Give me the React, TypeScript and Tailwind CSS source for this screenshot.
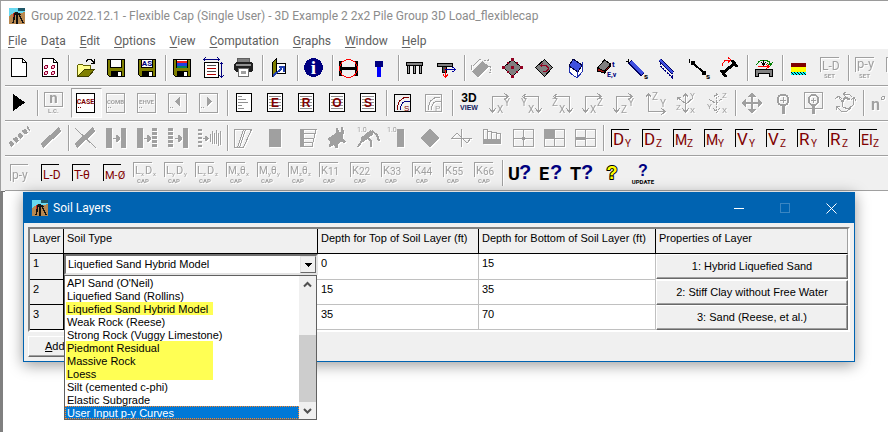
import type { ReactNode } from 'react'

type Tool = { label: string; icon: ReactNode; disabled?: boolean; pressed?: boolean } | null

const LABEL = 'Roboto, sans-serif'
const SANS = "'Liberation Sans', sans-serif"
const SERIF = "'Liberation Serif', serif"

function Txt({
  x,
  y,
  size,
  fill = 'currentColor',
  bold = false,
  font = LABEL,
  anchor = 'start',
  children,
}: {
  x: number
  y: number
  size: number
  fill?: string
  bold?: boolean
  font?: string
  anchor?: 'start' | 'middle' | 'end'
  children: ReactNode
}) {
  return (
    <text x={x} y={y} fontSize={size} fill={fill} fontWeight={bold ? 700 : 400} fontFamily={font} textAnchor={anchor}>
      {children}
    </text>
  )
}

function Line({ d, c = 'currentColor', w = 1, dash }: { d: string; c?: string; w?: number; dash?: string }) {
  return <path d={d} fill="none" stroke={c} strokeWidth={w} strokeDasharray={dash} />
}

function Shape({ d, f = 'currentColor', s = 'none' }: { d: string; f?: string; s?: string }) {
  return <path d={d} fill={f} stroke={s} />
}

// file icons

function Page({ children }: { children?: ReactNode }) {
  return (
    <>
      <Shape d="M7.5 7.5h11l4 4v14h-15z" f="#fff" s="#000" />
      <Line d="M18.5 7.5v4h4" c="#000" />
      {children}
    </>
  )
}

function Floppy({ children }: { children?: ReactNode }) {
  return (
    <>
      <Shape d="M6.5 8.5h17v17h-15l-2-2z" f="#808000" s="#000" />
      <Shape d="M9.5 8.5h11v8h-11z" f="#fff" s="#000" />
      <Shape d="M10 20h11v6h-11z" f="#000" />
      <Shape d="M17 21h3v4h-3z" f="#fff" />
      {children}
    </>
  )
}

function Slab({ y = 11 }: { y?: number }) {
  return (
    <>
      <Shape d={`M6.5 ${y + 0.5}h16v3h-16z`} f="#808080" s="#000" />
      <Shape d={`M7.5 ${y + 3.5}h2v8h-2zM13.5 ${y + 3.5}h2v8h-2zM19.5 ${y + 3.5}h2v8h-2z`} f="#a0a0a0" s="#000" />
    </>
  )
}

// box with letters, used by the load case commands
function Boxed({
  text,
  size = 6,
  color = 'currentColor',
  fill = 'none',
  border = 'currentColor',
}: {
  text?: string
  size?: number
  color?: string
  fill?: string
  border?: string
}) {
  return (
    <>
      <Shape d="M5.5 7.5h18v19h-18z" f={fill} s={border} />
      {text && (
        <Txt x={14.5} y={18} size={size} bold anchor="middle" fill={color}>
          {text}
        </Txt>
      )}
      <Line d="M7 21.5h1m1 0h1" c={color} />
    </>
  )
}

function Report({ letter }: { letter?: string }) {
  return (
    <>
      <Shape d="M7.5 7.5h15v18h-15z" f="#fff" s="#000" />
      {letter ? (
        <>
          <Line d="M9 10.5h12M9 13.5h12M9 16.5h12M9 19.5h12M9 22.5h12" c="#909090" />
          <Txt x={15} y={21} size={12} bold font={SANS} anchor="middle" fill="#800000">
            {letter}
          </Txt>
        </>
      ) : (
        <Line d="M9 10.5h4M9 13.5h8M9 16.5h10M9 19.5h4M9 22.5h6" c="#909090" />
      )}
    </>
  )
}

function Curves({ letter, a, b, border }: { letter: string; a: string; b: string; border: string }) {
  return (
    <>
      <Shape d="M6.5 8.5h16v17h-16z" f="none" s={border} />
      <Line d="M9.5 24v-4l2-5 4-3 5-1" c={a} />
      <Line d="M12.5 24v-3l2-4 3-2h4" c={b} />
      <Txt x={16} y={25} size={8} font={SANS} fill={a}>
        {letter}
      </Txt>
    </>
  )
}

function AxesPair({ kind, a, b }: { kind: 'right' | 'left' | 'up'; a: string; b: string }) {
  if (kind === 'right') {
    return (
      <>
        <Line d="M7.5 26v-15.5h15M4.5 22.5l3 4 3-4M19.5 7.5l4 3-4 3" />
        <Txt x={19} y={20} size={10}>{a}</Txt>
        <Txt x={12} y={27} size={10}>{b}</Txt>
      </>
    )
  }
  if (kind === 'left') {
    return (
      <>
        <Line d="M22.5 26v-15.5h-15M19.5 22.5l3 4 3-4M10.5 7.5l-4 3 4 3" />
        <Txt x={5} y={20} size={10}>{a}</Txt>
        <Txt x={12} y={27} size={10}>{b}</Txt>
      </>
    )
  }
  return (
    <>
      <Line d="M8.5 8v17.5h16M5.5 11.5l3-4 3 4M21.5 22.5l4 3-4 3" />
      <Txt x={12} y={14} size={10}>{a}</Txt>
      <Txt x={20} y={21} size={10}>{b}</Txt>
    </>
  )
}

// letters over a pair of graph axes
function Graph({ text, sub, size }: { text: string; sub: string; size: number }) {
  return (
    <>
      <Line d="M6.5 26v-17.5h17" c="#000" />
      <Txt x={8} y={24} size={size} fill="#800000">{text}</Txt>
      <Txt x={20} y={26} size={10} fill="#800000">{sub}</Txt>
    </>
  )
}

function Curve({ text, size = 12, color = 'currentColor', axis = 'currentColor' }: { text: string; size?: number; color?: string; axis?: string }) {
  return (
    <>
      <Line d="M6.5 25v-16.5h17" c={axis} />
      <Txt x={8} y={23} size={size} fill={color}>{text}</Txt>
    </>
  )
}

function Labelled({ children, note }: { children?: ReactNode; note: string }) {
  return (
    <>
      <Line d="M5.5 21v-14.5h18" />
      {children}
      <Txt x={9} y={27} size={6} bold>{note}</Txt>
    </>
  )
}

function Cap({ a, b, s }: { a: string; b?: string; s: string }) {
  const wide = a === 'M'
  return (
    <Labelled note="CAP">
      <Txt x={7} y={18} size={wide ? 10 : 11}>{a}</Txt>
      {b ? (
        <>
          <Txt x={wide ? 16 : 13} y={20} size={6}>{s}</Txt>
          <Txt x={wide ? 19 : 17} y={18} size={wide ? 10 : 11}>{b}</Txt>
          <Txt x={25} y={20} size={6}>{s}</Txt>
        </>
      ) : (
        <Txt x={14} y={19} size={10}>{s}</Txt>
      )}
    </Labelled>
  )
}

function Query({ letter }: { letter: string }) {
  return (
    <>
      <Txt x={4} y={24} size={18} bold fill="#000">{letter}</Txt>
      <Txt x={15} y={23} size={20} bold font={SANS} fill="#000080">?</Txt>
    </>
  )
}

const barL = 'M5 7h6v20h-6z'
const barR = 'M20 7h5v20h-5z'
const stripesL = 'M5 7h5v3h-5zM5 11h5v3h-5zM5 15h5v3h-5zM5 19h5v3h-5zM5 23h5v3h-5z'
const stripesR = 'M20 7h5v3h-5zM20 11h5v3h-5zM20 15h5v3h-5zM20 19h5v3h-5zM20 23h5v3h-5z'
const arrowMid = 'M12 17h3v-3h1l3 3v1l-3 3h-1v-3h-3z'

const fileTools: Tool[] = [
  { label: 'New', icon: <Page /> },
  {
    label: 'Data',
    icon: (
      <Page>
        <g fill="#ffc0d8" stroke="#900030">
          <circle cx="11" cy="16" r="1.5" />
          <circle cx="18" cy="16" r="1.5" />
          <circle cx="11" cy="22" r="1.5" />
          <circle cx="18" cy="22" r="1.5" />
        </g>
      </Page>
    ),
  },
  null,
  {
    label: 'Open',
    icon: (
      <>
        <Shape d="M7.5 25.5v-11l1-1h4l1 1h7v4h-6z" f="#ffff90" s="#606000" />
        <Shape d="M7.5 25.5l7-7h10l-6 7z" f="#808000" s="#404000" />
        <Line d="M16 10.5l2-2h3l3 3M24.5 8v4h-4" c="#000" />
      </>
    ),
  },
  { label: 'Save', icon: <Floppy /> },
  {
    label: 'Save as',
    icon: (
      <Floppy>
        <Txt x={15} y={15} size={8} bold anchor="middle" fill="#000080">AS</Txt>
      </Floppy>
    ),
  },
  null,
  {
    label: 'Save graphics',
    icon: (
      <Floppy>
        <Shape d="M10 10h10v2h-10z" f="#f02020" />
        <Shape d="M10 12h10v3h-10z" f="#2040e0" />
        <Shape d="M10 15h10v2h-10z" f="#008060" />
      </Floppy>
    ),
  },
  {
    label: 'Page layout',
    icon: (
      <>
        <Shape d="M6.5 11.5h14v15h-14z" f="#fff" s="#000" />
        <Line d="M9 14.5h9M9 20.5h9" c="#505050" />
        <Line d="M9 17.5h9M9 23.5h9" c="#b00000" />
        <Line d="M5 8.5h17M7.5 6.5l-2 2 2 2M19.5 6.5l2 2-2 2M23.5 11v16M21.5 13.5l2-2 2 2M21.5 24.5l2 2 2-2" c="#000080" />
      </>
    ),
  },
  {
    label: 'Print',
    icon: (
      <>
        <Shape d="M8.5 7.5h12v5h-12z" f="#808080" s="#606060" />
        <Shape d="M5 13l2-2h15l2 2v6l-2 2h-15l-2-2z" f="#202020" />
        <Shape d="M7 13h15v2h-15z" f="#909090" />
        <Shape d="M9.5 17.5h10v8h-10z" f="#fff" s="#707070" />
        <Shape d="M12 20h5v3h-5z" f="#a0a0a0" />
      </>
    ),
  },
  null,
  {
    label: 'Exit',
    icon: (
      <>
        <Shape d="M9.5 12.5h12v10h-12z" f="#fff" s="#000" />
        <Shape d="M8.5 11.5l4-4v14l-4 4z" f="#808000" s="#000" />
        <Line d="M9 25l9-8" c="#2040b0" w={2} />
        <Line d="M15 15.5h5v5" c="#2040b0" w={2} />
      </>
    ),
  },
  null,
  {
    label: 'About',
    icon: (
      <>
        <circle cx="14.5" cy="16.5" r="9.5" fill="#000080" />
        <Txt x={14.5} y={23} size={19} bold font={SERIF} anchor="middle" fill="#fff">i</Txt>
      </>
    ),
  },
  null,
  {
    label: 'Pile sections',
    icon: (
      <>
        <Shape d="M5 10h3v15h-3zM21 10h3v15h-3zM8 16h13v3h-13z" f="#000" />
        <circle cx="14.5" cy="17.5" r="9" fill="none" stroke="#ff0000" />
      </>
    ),
  },
  {
    label: 'Pile properties',
    icon: (
      <>
        <Shape d="M10 10h8v6h-8z" f="#000080" />
        <Shape d="M12 16h4v10h-4z" f="#0000ff" />
      </>
    ),
  },
  null,
  { label: 'Pile cap', icon: <Slab /> },
  {
    label: 'Pile head loads',
    icon: (
      <>
        <Shape d="M6.5 12.5h15v3h-15z" f="#808080" s="#000" />
        <Shape d="M11.5 15.5h4v6h-4z" f="#505050" s="#000" />
        <Line d="M14.5 17v9M12 23.5l2.5 3 2.5-3" c="#ff0000" />
        <Line d="M14 18.5h10M21.5 16l3 2.5-3 2.5" c="#0000a0" />
      </>
    ),
  },
  null,
  {
    label: 'Cap dimensions',
    disabled: true,
    icon: (
      <>
        <Shape d="M6 21l10-11 7 5-11 11z" />
        <Line d="M5 17l8-8M18 9h5M22.5 8v2M5 14v4h2M23 15h3M24.5 15v6M23 21h3M13 8h2" dash="2 1" />
      </>
    ),
  },
  {
    label: 'Cap nodes',
    icon: (
      <>
        <Shape d="M6.5 16.5l9-8 9 8-9 9z" f="#808080" s="#000" />
        <Shape d="M5 15h3v3h-3zM14 7h3v3h-3zM23 15h3v3h-3zM14 24h3v3h-3zM14 15h3v3h-3zM10 11h2v2h-2zM19 11h2v2h-2zM10 20h2v2h-2zM19 20h2v2h-2z" f="#900020" />
      </>
    ),
  },
  {
    label: 'Cap rotation',
    icon: (
      <>
        <Shape d="M7.5 16.5l9-8 8 8-8 9z" f="#808080" s="#000" />
        <Line d="M13 14.5h5l2 2v2l-2 2h-3M14.5 12.5l-2 2 2 2" c="#900020" />
      </>
    ),
  },
  {
    label: 'Cap thickness',
    icon: (
      <>
        <Shape d="M10 15v6l8 6 5-6v-8l-4 7z" f="#fff" s="#2030b0" />
        <Shape d="M10 15l4-7 9 6-4 7z" f="#4050e0" s="#000040" />
        <Line d="M18.5 20v6" c="#2030b0" />
      </>
    ),
  },
  {
    label: 'Cap material',
    icon: (
      <>
        <Shape d="M7.5 18l7-8 6 3v2l-6 7-7-2z" f="#a01010" s="#000" />
        <Shape d="M7.5 17l7-8 6 4-6 7z" f="#808080" s="#000" />
        <Txt x={22} y={16} size={8} bold fill="#000080">t</Txt>
        <Txt x={17} y={26} size={7} bold fill="#000080">E,ν</Txt>
      </>
    ),
  },
  {
    label: 'Beam elements',
    icon: (
      <>
        <Line d="M9 11l13 13" c="#000060" w={5} />
        <Line d="M10 11l12 12" c="#4050e0" w={3} />
        <Line d="M7.5 8v4M5 10.5h2" c="#000" />
        <Txt x={23} y={28} size={8} bold fill="#000">s</Txt>
      </>
    ),
  },
  {
    label: 'Beam sections',
    icon: (
      <>
        <Line d="M8 9l13 13" c="#000060" w={4} />
        <Line d="M8 9l13 13" c="#4050e0" w={2} />
        <Line d="M8.5 12v3l12 12v-5" c="#000080" dash="2 1" />
      </>
    ),
  },
  {
    label: 'Beam joints',
    icon: (
      <>
        <Line d="M9 11l13 12" c="#000" w={2} />
        <Shape d="M8 10h4v4h-4zM19 20h4v4h-4z" f="#000" />
        <Line d="M6.5 8v4" c="#000" />
        <Txt x={23} y={28} size={8} bold fill="#000">s</Txt>
      </>
    ),
  },
  {
    label: 'Beam rotation',
    icon: (
      <>
        <Line d="M10 21l11-9" c="#000" w={3} />
        <Line d="M7 19l5 7M18 9l5 7" c="#000" w={3} />
        <Line d="M8.5 15v-2l3-4h5M14 6.5l3 2.5-3 2.5" c="#ff0000" />
      </>
    ),
  },
  null,
  {
    label: 'Cap loads',
    icon: (
      <>
        <Shape d="M6.5 18.5h17v7h-3v-3h-11v3h-3z" f="#808080" s="#000" />
        <Line d="M7.5 14l2-3 3-2h4l4 2 1 3M18.5 12.5l3 2 2-3" c="#008000" />
        <Line d="M14.5 9v5M12.5 11.5l2 2.5 2-2.5" c="#000" />
        <Line d="M9 15.5h11M17.5 13.5l3 2-3 2" c="#ff0000" />
      </>
    ),
  },
  null,
  {
    label: 'Soil layers',
    icon: (
      <>
        <Shape d="M7 12h15v4h-15z" f="#800000" />
        <Shape d="M7 16h15v5h-15z" f="#ffff00" />
        <Shape d="M7 21h15v3h-15z" f="#00ffff" />
        <Line d="M7 21.5h15" c="#000" dash="1 2" />
        <Line d="M8 22.5h14" c="#000" dash="1 2" />
        <Line d="M9 23.5h13" c="#000" dash="1 2" />
      </>
    ),
  },
  { label: 'L-D set', disabled: true, icon: <Labelled note="SET"><Txt x={7} y={19} size={12}>L-D</Txt></Labelled> },
  null,
  { label: 'p-y set', disabled: true, icon: <Labelled note="SET"><Txt x={7} y={17} size={13}>p-y</Txt></Labelled> },
  { label: 't-z set', disabled: true, icon: <Line d="M5.5 21v-14.5h18M8 10.5h10M12.5 10v9" /> },
]

const runTools: Tool[] = [
  { label: 'Run', icon: <Shape d="M9 8l12 8.5-12 8.5z" f="#000" /> },
  null,
  {
    label: 'Load case number',
    disabled: true,
    icon: (
      <>
        <Shape d="M5.5 6.5h18v14h-18z" f="none" s="currentColor" />
        <Txt x={14.5} y={17} size={15} bold anchor="middle">n</Txt>
        <Txt x={9} y={27} size={6} bold>L.C.</Txt>
      </>
    ),
  },
  { label: 'Load case', pressed: true, icon: <Boxed text="CASE" size={7} color="#800000" fill="#fff" border="#000" /> },
  { label: 'Load combination', disabled: true, icon: <Boxed text="COMB" /> },
  { label: 'Envelope', disabled: true, icon: <Boxed text="EHVE" /> },
  { label: 'Previous case', disabled: true, icon: <><Boxed /><Shape d="M17 11v9l-5-4.5z" /></> },
  { label: 'Next case', disabled: true, icon: <><Boxed /><Shape d="M13 11v9l5-4.5z" /></> },
  null,
  { label: 'Input text', icon: <Report /> },
  { label: 'Echo report', icon: <Report letter="E" /> },
  { label: 'Results report', icon: <Report letter="R" /> },
  { label: 'Output report', icon: <Report letter="O" /> },
  { label: 'Summary report', icon: <Report letter="S" /> },
  null,
  { label: 'Soil curves', icon: <Curves letter="S" a="#800000" b="#000080" border="#000" /> },
  { label: 'Pile curves', disabled: true, icon: <Curves letter="P" a="currentColor" b="currentColor" border="currentColor" /> },
  null,
  {
    label: '3D view',
    icon: (
      <>
        <Txt x={15} y={16} size={12} bold anchor="middle" font={SANS} fill="#000">3D</Txt>
        <Txt x={15} y={24} size={7} bold anchor="middle" font={SANS} fill="#102060">VIEW</Txt>
      </>
    ),
  },
  { label: 'View XY', disabled: true, icon: <AxesPair kind="right" a="Y" b="X" /> },
  { label: 'View YX', disabled: true, icon: <AxesPair kind="left" a="Y" b="X" /> },
  { label: 'View ZX', disabled: true, icon: <AxesPair kind="left" a="Z" b="X" /> },
  { label: 'View XZ', disabled: true, icon: <AxesPair kind="right" a="Z" b="X" /> },
  { label: 'View YZ', disabled: true, icon: <AxesPair kind="right" a="Y" b="Z" /> },
  { label: 'View ZY', disabled: true, icon: <AxesPair kind="up" a="Z" b="Y" /> },
  {
    label: 'Isometric view',
    disabled: true,
    icon: (
      <>
        <Line d="M14.5 8v18M11.5 11.5l3-4 3 4M11.5 22.5l3 4 3-4M14 17l-7-5M22 12l-8 7M6 14v-3h4" />
        <Txt x={19} y={12} size={8}>Y</Txt>
        <Txt x={5} y={24} size={8}>Z</Txt>
        <Txt x={19} y={27} size={8}>X</Txt>
      </>
    ),
  },
  {
    label: 'Free view',
    disabled: true,
    icon: (
      <>
        <Line d="M14.5 8v18" dash="2 1" />
        <Line d="M11.5 11.5l3-4 3 4M11.5 22.5l3 4 3-4M7 13.5l7 4 6-5" dash="3 1" />
        <Txt x={20} y={12} size={8}>Z</Txt>
        <Txt x={5} y={23} size={8}>Y</Txt>
        <Txt x={20} y={27} size={8}>X</Txt>
      </>
    ),
  },
  null,
  {
    label: 'Pan',
    disabled: true,
    icon: (
      <>
        <Line d="M15 8v18M6 17h18" w={2} />
        <Shape d="M15 6l4 5h-8zM15 28l4-5h-8zM4 17l5-4v8zM26 17l-5-4v8z" />
      </>
    ),
  },
  {
    label: 'Zoom',
    disabled: true,
    icon: (
      <>
        <circle cx="15" cy="14" r="5.5" fill="none" stroke="currentColor" strokeWidth="2" />
        <Line d="M15.5 11v6M12 14.5h6" />
        <Line d="M15.5 20v8" w={3} />
      </>
    ),
  },
  {
    label: 'Zoom window',
    disabled: true,
    icon: (
      <>
        <Shape d="M5.5 6.5h18v16h-18z" f="none" s="currentColor" />
        <circle cx="14.5" cy="14" r="5" fill="none" stroke="currentColor" strokeWidth="2" />
        <Line d="M14.5 12v5M12 14.5h5" />
        <Line d="M14.5 20v8" w={3} />
      </>
    ),
  },
  {
    label: 'Rotate',
    disabled: true,
    icon: (
      <>
        <Line d="M9 11l3 5 1 5 5 2 5-4 1-7M5 13l4-3 3 3M21 14l3-3 2 4M14 8h5l3 3M16 6l-3 2 3 3M6 20l5 5h6l4-3M6 24v-4h4" />
        <Line d="M12 16l3-4 5 1" w={2} />
      </>
    ),
  },
  null,
  {
    label: 'Pile numbers',
    disabled: true,
    icon: (
      <>
        <Txt x={6} y={24} size={16} bold>n</Txt>
        <circle cx="18" cy="12" r="1.5" fill="none" stroke="currentColor" />
      </>
    ),
  },
]

const graph = (text: string, sub: string, size = 17): Tool => ({
  label: `${text} ${sub} graph`,
  icon: <Graph text={text} sub={sub} size={size} />,
})

const plotTools: Tool[] = [
  { label: 'Undeformed', disabled: true, icon: <Line d="M6 24l19-17" w={5} dash="4 2" /> },
  { label: 'Deformed', disabled: true, icon: <Line d="M7 25l18-17" w={5} /> },
  null,
  { label: 'Hide elements', disabled: true, icon: <><Line d="M6 25l18-17" w={5} /><Line d="M5 7l21 20" /></> },
  { label: 'Solid to solid', disabled: true, icon: <Shape d={barL + barR + arrowMid} /> },
  { label: 'Solid to mesh', disabled: true, icon: <Shape d={barL + stripesR + arrowMid} /> },
  { label: 'Mesh to solid', disabled: true, icon: <Shape d={stripesL + barR + arrowMid} /> },
  {
    label: 'Mesh to lines',
    disabled: true,
    icon: (
      <>
        <Shape d="M4 8h4v2h-4zM4 12h4v2h-4zM4 16h4v2h-4zM4 20h4v2h-4zM4 24h4v2h-4zM9 17h2v-2h1l3 2v1l-3 2h-1v-2h-2z" />
        <Line d="M16.5 13v8M18.5 10v13M20.5 12v11M22.5 9v14M24.5 12v13M26.5 10v14" />
      </>
    ),
  },
  null,
  { label: 'Deflected outline', disabled: true, icon: <><Line d="M5.5 8.5h11l-6 18h-5z" /><Line d="M14.5 8.5h8l-8 18h-6z" /></> },
  { label: 'Solid', disabled: true, icon: <Shape d="M9 8h12v18h-12z" /> },
  { label: 'Pressure', disabled: true, icon: <><Shape d="M9 8h4v18h-4z" /><Line d="M13 8.5h12l-4 17h-8M13 12.5h11M13 17.5h10M13 21.5h9" /></> },
  { label: 'Deformed solid', disabled: true, icon: <Shape d="M5 18l6-4 3-2v-5h2l1 4h2v-5h2l1 5-1 4v3l3 2-1 2-4-1-3 2v4h-3l-1-4-2 2-3 1 1-5z" /> },
  {
    label: 'Scale deformation',
    disabled: true,
    icon: (
      <>
        <Txt x={4} y={11} size={7}>1.0</Txt>
        <Line d="M9 19l10-8" w={5} />
        <Line d="M10 18l-5 8M14 16l4 4v6M19 10l5 4 2 6" w={2} />
      </>
    ),
  },
  { label: 'Scale solid', disabled: true, icon: <><Txt x={3} y={11} size={7}>1.0</Txt><Shape d="M13 8h7v18h-7z" /></> },
  { label: 'Cap contour', disabled: true, icon: <Shape d="M5 17l10-9 10 9-10 9z" /> },
  { label: 'Moment diagram', disabled: true, icon: <Line d="M5 17.5h21M15.5 8v18M6 17l5-5 10 10 4-5" /> },
  {
    label: 'Cap section',
    disabled: true,
    icon: (
      <>
        <Shape d="M6 18h18v5h-18z" />
        <Line d="M6.5 18v-9.5h4v10M10.5 10.5h4v8M14.5 11.5h5v7M19.5 12.5h4v6" />
      </>
    ),
  },
  { label: 'Mesh centre', disabled: true, icon: <><Line d="M5.5 8.5h20v17h-20zM15.5 8.5v17M5.5 17.5h20" /><Shape d="M14 16h3v3h-3z" /></> },
  { label: 'Mesh quarter', disabled: true, icon: <><Line d="M5.5 8.5h20v17h-20zM15.5 8.5v17M5.5 17.5h20" /><Shape d="M6 9h10v9h-10z" /></> },
  { label: 'Mesh edge', disabled: true, icon: <><Line d="M5.5 8.5h20v17h-20zM15.5 8.5v17M5.5 17.5h20" /><Shape d="M6 16h10v3h-10z" /></> },
  null,
  graph('D', 'Y'),
  graph('D', 'Z'),
  graph('M', 'Z', 14),
  graph('M', 'Y', 14),
  graph('V', 'Y'),
  graph('V', 'Z'),
  graph('R', 'Y'),
  graph('R', 'Z'),
  graph('EI', 'Z', 14),
]

const cap = (a: string, s: string, b?: string): Tool => ({
  label: `${a} ${s} cap curve`,
  disabled: true,
  icon: <Cap a={a} b={b} s={s} />,
})

const curveTools: Tool[] = [
  { label: 'p-y curves', disabled: true, icon: <Curve text="p-y" /> },
  { label: 'Load-deflection', icon: <Curve text="L-D" color="#800000" axis="#000" /> },
  { label: 'Torque-rotation', icon: <Curve text="T-θ" color="#800000" axis="#000" /> },
  { label: 'Moment-rotation', icon: <Curve text="M-Ø" size={11} color="#800000" axis="#000" /> },
  cap('L', 'x', 'D'),
  cap('L', 'y', 'D'),
  cap('L', 'z', 'D'),
  cap('M', 'x', 'θ'),
  cap('M', 'y', 'θ'),
  cap('M', 'z', 'θ'),
  cap('K', '11'),
  cap('K', '22'),
  cap('K', '33'),
  cap('K', '44'),
  cap('K', '55'),
  cap('K', '66'),
  null,
  { label: "User's manual", icon: <Query letter="U" /> },
  { label: 'Examples manual', icon: <Query letter="E" /> },
  { label: 'Technical manual', icon: <Query letter="T" /> },
  {
    label: 'Help',
    icon: (
      <text
        x="15"
        y="23"
        fontSize="18"
        fontWeight="700"
        fontFamily={SANS}
        textAnchor="middle"
        fill="#ffff00"
        stroke="#000"
        strokeWidth="2"
        strokeLinejoin="round"
        paintOrder="stroke"
      >
        ?
      </text>
    ),
  },
  {
    label: 'Check for update',
    icon: (
      <>
        <Txt x={15} y={20} size={16} bold anchor="middle" font={SANS} fill="#000080">?</Txt>
        <Txt x={15} y={28} size={6} bold anchor="middle" fill="#000">UPDATE</Txt>
      </>
    ),
  },
]

function ToolRow({ tools }: { tools: Tool[] }) {
  return (
    <div className="ml-1 flex h-[35px] overflow-hidden border-b border-[#a0a0a0] shadow-[0_1px_0_#fff]">
      {tools.map((tool, i) =>
        tool ? (
          <button
            key={i}
            type="button"
            aria-label={tool.label}
            disabled={tool.disabled}
            className={
              tool.pressed
                ? 'my-0.5 h-[30px] w-[31px] shrink-0 border border-[#a0a0a0] border-r-white border-b-white bg-[#f8f8f8]'
                : '-ml-px mr-px w-[31px] shrink-0 text-black disabled:text-[#a0a0a0] disabled:drop-shadow-[1px_1px_0_#fff]'
            }
          >
            <svg
              viewBox={tool.pressed ? '1 3 29 28' : '0 0 31 34'}
              shapeRendering="crispEdges"
              className="block w-full"
              aria-hidden="true"
            >
              {tool.icon}
            </svg>
          </button>
        ) : (
          <span key={i} className="mx-px my-1 w-0.5 shrink-0 border-r border-l border-r-white border-l-[#a0a0a0]" />
        ),
      )}
    </div>
  )
}

function AppIcon() {
  return (
    <svg viewBox="0 0 16 16" shapeRendering="crispEdges" className="size-4 shrink-0" aria-hidden="true">
      <path d="M0 0h16v16H0z" fill="#b88850" />
      <path d="M0 0h16v4l-5 1-5-1-6 4z" fill="#68d8f0" />
      <path d="M9 0h7v3H9z" fill="#205868" />
      <path d="M4 5l4-1 4 2v1l-4-1-4 2z" fill="#181818" />
      <path d="M6 6l-2 9M8 6v10M10 6l4 9" stroke="#101010" fill="none" strokeWidth="1.5" />
      <path d="M4.5 5v4" stroke="#d02020" fill="none" />
    </svg>
  )
}

const menus = ['File', 'Data', 'Edit', 'Options', 'View', 'Computation', 'Graphs', 'Window', 'Help']

function Menu({ name }: { name: string }) {
  // Data uses its third letter as the access key
  const k = name === 'Data' ? 2 : 0
  return (
    <button type="button" className="px-[7px]">
      {name.slice(0, k)}
      <span className="underline underline-offset-2">{name[k]}</span>
      {name.slice(k + 1)}
    </button>
  )
}

const soilTypes = [
  { name: "API Sand (O'Neil)" },
  { name: 'Liquefied Sand (Rollins)' },
  { name: 'Liquefied Sand Hybrid Model', marked: true },
  { name: 'Weak Rock (Reese)' },
  { name: 'Strong Rock (Vuggy Limestone)' },
  { name: 'Piedmont Residual', marked: true },
  { name: 'Massive Rock', marked: true },
  { name: 'Loess', marked: true },
  { name: 'Silt (cemented c-phi)' },
  { name: 'Elastic Subgrade' },
  { name: 'User Input p-y Curves' },
]

const layers = [
  { top: '0', bottom: '15', soil: 'Liquefied Sand Hybrid Model', properties: '1: Hybrid Liquefied Sand' },
  { top: '15', bottom: '35', soil: 'Stiff Clay without Free Water', properties: '2: Stiff Clay without Free Water' },
  { top: '35', bottom: '70', soil: 'Sand (Reese)', properties: '3: Sand (Reese, et al.)' },
]

function SoilTypeList() {
  return (
    <div className="absolute top-[21px] left-0 z-10 flex w-[253px] border border-[#606060] bg-white">
      <ul role="listbox" aria-label="Soil types" className="flex-1">
        {soilTypes.map((soil, i) => {
          const selected = i === soilTypes.length - 1
          return (
            <li
              key={soil.name}
              role="option"
              aria-selected={selected}
              className={
                selected
                  ? 'h-[13px] bg-[#0078d7] px-px leading-[14px] text-white outline-1 -outline-offset-1 outline-dotted outline-[#ff8728]'
                  : 'h-[13px] px-px leading-[14px]'
              }
            >
              <span className={soil.marked ? 'block h-[13px] w-[147px] bg-[#ffff54] px-px' : 'block px-px'}>
                {soil.name}
              </span>
            </li>
          )
        })}
      </ul>
      <div className="flex w-[17px] flex-col items-center bg-[#f0f0f0]">
        <svg viewBox="0 0 17 17" className="size-[17px]" fill="none" stroke="#505050" strokeWidth="2">
          <path d="M5 10.5l3.5-3.5 3.5 3.5" />
        </svg>
        <div className="flex-1" />
        <div className="h-[67px] w-full bg-[#cdcdcd]" />
        <svg viewBox="0 0 17 17" className="size-[17px]" fill="none" stroke="#505050" strokeWidth="2">
          <path d="M5 7l3.5 3.5 3.5-3.5" />
        </svg>
      </div>
    </div>
  )
}

const headCell =
  'border-r border-b border-black bg-[#f0f0f0] px-[3px] py-[2px] text-left align-top font-normal last:border-r-[#a0a0a0]'

function SoilTable() {
  return (
    <table className="w-full table-fixed border-separate border-spacing-0 border-2 border-[#808080] border-r-white border-b-white bg-white">
      <colgroup>
        <col className="w-[34px]" />
        <col className="w-[254px]" />
        <col className="w-[161px]" />
        <col className="w-[177px]" />
        <col />
      </colgroup>
      <thead>
        <tr className="h-[25px]">
          <th className={headCell}>Layer</th>
          <th className={headCell}>Soil Type</th>
          <th className={headCell}>Depth for Top of Soil Layer (ft)</th>
          <th className={headCell}>Depth for Bottom of Soil Layer (ft)</th>
          <th className={headCell}>Properties of Layer</th>
        </tr>
      </thead>
      <tbody>
        {layers.map((layer, i) => (
          <tr key={i} className="h-[25px] first:h-[26px]">
            <td className="border-r border-b border-black bg-[#f0f0f0] px-[3px] pt-0.5 align-top">{i + 1}</td>
            <td className="border-b border-[#c0c0c0] p-0 align-top">
              {i === 0 && (
                <div className="relative">
                  <div className="flex h-[21px] items-center border-2 border-[#707070] border-r-[#e3e3e3] border-b-[#e3e3e3] bg-white">
                    <select
                      aria-label="Soil type of layer 1"
                      defaultValue={layer.soil}
                      className="h-full min-w-0 flex-1 appearance-none pl-0.5 outline-none"
                    >
                      {soilTypes.map((s) => (
                        <option key={s.name}>{s.name}</option>
                      ))}
                    </select>
                    <span className="flex h-full w-4 items-center justify-center border border-[#e3e3e3] border-r-[#696969] border-b-[#696969] bg-[#f0f0f0]">
                      <svg viewBox="0 0 7 4" className="h-1 w-[7px]" shapeRendering="crispEdges">
                        <path d="M0 0h7L3.5 4z" />
                      </svg>
                    </span>
                  </div>
                  <SoilTypeList />
                </div>
              )}
            </td>
            <td className="border-r border-b border-[#c0c0c0] px-[3px] pt-0.5 align-top">
              <input aria-label={`Top depth of layer ${i + 1}`} defaultValue={layer.top} className="block w-full outline-none" />
            </td>
            <td className="border-r border-b border-[#c0c0c0] px-[3px] pt-0.5 align-top">
              <input aria-label={`Bottom depth of layer ${i + 1}`} defaultValue={layer.bottom} className="block w-full outline-none" />
            </td>
            <td className="p-0 align-top">
              <button
                type="button"
                className="block h-[25px] w-full border border-white border-r-[#696969] border-b-[#696969] bg-[#f0f0f0] shadow-[inset_-1px_-1px_0_#a0a0a0]"
              >
                {layer.properties}
              </button>
            </td>
          </tr>
        ))}
      </tbody>
    </table>
  )
}

function SoilLayersDialog() {
  return (
    <section
      role="dialog"
      aria-label="Soil Layers"
      className="mr-[33px] ml-5 border border-[#0063b1] bg-[#f0f0f0] font-['Liberation_Sans',sans-serif] text-[11px] leading-[15px] text-black shadow-[0_3px_14px_rgba(0,0,0,0.4)]"
    >
      <header className="flex h-[30px] items-center bg-[#0063b1] pl-2 text-white">
        <AppIcon />
        <h2 className="ml-[5px] flex-1 font-[Roboto,sans-serif] text-[12px]">Soil Layers</h2>
        <button type="button" aria-label="Minimize" className="flex w-[46px] justify-center">
          <span className="h-px w-[10px] bg-white" />
        </button>
        <button type="button" aria-label="Maximize" disabled className="flex w-[46px] justify-center">
          <span className="size-[10px] border border-[#3a86c2]" />
        </button>
        <button type="button" aria-label="Close" className="flex w-[46px] justify-center">
          <svg viewBox="0 0 11 11" className="size-[11px]" stroke="#fff">
            <path d="M.5.5l10 10M10.5.5l-10 10" />
          </svg>
        </button>
      </header>
      <div className="px-1 pt-1 pb-1">
        <SoilTable />
        <button
          type="button"
          className="mt-1 block h-[21px] w-[92px] border border-white border-r-[#696969] border-b-[#696969] pl-4 text-left shadow-[inset_-1px_-1px_0_#a0a0a0]"
        >
          <span className="underline underline-offset-1">A</span>dd Row
        </button>
      </div>
    </section>
  )
}

export default function App() {
  return (
    <div className="flex min-h-screen flex-col border-t border-[#9a9a9a] bg-white font-[Roboto,sans-serif]">
      <header className="flex h-[30px] items-center gap-1.5 border-l border-[#a0a0a0] pl-2 text-[12px] text-[#8c8c8c]">
        <AppIcon />
        <h1 className="whitespace-nowrap">
          Group 2022.12.1 - Flexible Cap (Single User) - 3D Example 2 2x2 Pile Group 3D Load_flexiblecap
        </h1>
      </header>
      <nav className="flex h-[18px] items-center border-l border-[#a0a0a0] pt-0.5 text-[12px] text-[#606060]">
        {menus.map((name) => (
          <Menu key={name} name={name} />
        ))}
      </nav>
      <div className="border-b border-l border-b-[#707070] border-l-[#a0a0a0] bg-[#f0f0f0] pt-0.5">
        <ToolRow tools={fileTools} />
        <ToolRow tools={runTools} />
        <ToolRow tools={plotTools} />
        <ToolRow tools={curveTools} />
      </div>
      <main className="flex-1 border-l-[3px] border-[#808080] bg-white">
        <SoilLayersDialog />
      </main>
    </div>
  )
}
